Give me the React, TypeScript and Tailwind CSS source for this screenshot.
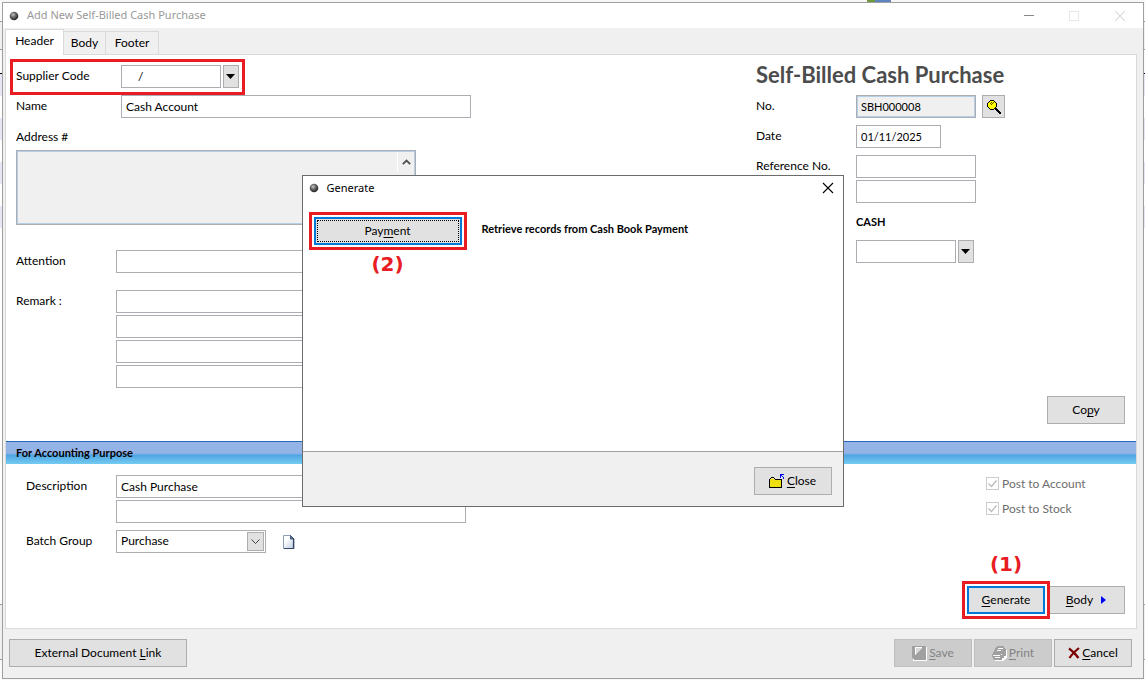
import React from 'react';
import { clsx } from 'clsx';

// Shared field and button styles
const fieldStyle = 'h-[23px] border border-[#abadb3] bg-white px-1 pb-px text-black outline-none';

interface PushButtonProps {
  children: React.ReactNode;
  variant?: 'normal' | 'default' | 'focused';
  disabled?: boolean;
  className?: string;
}

function PushButton({ children, variant = 'normal', disabled, className }: PushButtonProps) {
  return (
    <button
      type="button"
      disabled={disabled}
      className={clsx(
        'flex h-7 items-center justify-center whitespace-pre',
        disabled ? 'border border-[#bfbfbf] bg-[#cccccc] text-[#838383]' : 'bg-[#e1e1e1] text-black',
        !disabled && variant === 'normal' && 'border border-[#adadad]',
        variant !== 'normal' && 'border-2 border-[#0078d7]',
        variant === 'focused' && 'p-px',
        className
      )}
    >
      {variant === 'focused' ? (
        <span className="flex h-full w-full items-center justify-center border border-dotted border-black">
          {children}
        </span>
      ) : (
        children
      )}
    </button>
  );
}

function Key({ children }: { children: string }) {
  return <span className="underline underline-offset-2">{children}</span>;
}

function DropButton({ label }: { label: string }) {
  return (
    <button
      type="button"
      aria-label={label}
      className="flex h-[23px] w-4 items-center justify-center border border-[#adadad] bg-[#e1e1e1]"
    >
      <svg width="10" height="5" viewBox="0 0 10 5" className="shrink-0">
        <path d="M0 0h9L4.5 5z" fill="#000" />
      </svg>
    </button>
  );
}

function Ball() {
  return (
    <svg width="10" height="10" viewBox="0 0 10 10" className="shrink-0">
      <defs>
        <radialGradient id="ball" cx="0.4" cy="0.35" r="0.6">
          <stop offset="0" stopColor="#c8c8c8" />
          <stop offset="0.45" stopColor="#707070" />
          <stop offset="1" stopColor="#2c2c2c" />
        </radialGradient>
      </defs>
      <circle cx="5" cy="5" r="4.3" fill="url(#ball)" />
    </svg>
  );
}

function MagnifierIcon() {
  return (
    <svg width="14" height="14" viewBox="0 0 14 14" shapeRendering="crispEdges">
      <path d="M3 1h4v1h1v1h1v4h-1v1h-1v1h-4v-1h-1v-1h-1v-4h1v-1h1z" fill="#ff0" />
      <path
        d="M3 0h4v1h-4zM2 1h1v1h-1zM7 1h1v1h-1zM1 2h1v1h-1zM8 2h1v1h-1zM0 3h1v4h-1zM9 3h1v4h-1zM1 7h1v1h-1zM8 7h1v1h-1zM2 8h1v1h-1zM7 8h1v1h-1zM3 9h4v1h-4z"
        fill="#000"
      />
      <path d="M4 2h1v1h-1zM3 3h1v1h-1zM5 3h1v1h-1zM6 2h1v1h-1zM4 4h1v1h-1z" fill="#555500" />
      <path d="M8 8h2v1h1v1h1v1h1v1h1v2h-2v-1h-1v-1h-1v-1h-1v-1h-1z" fill="#000" />
    </svg>
  );
}

function FolderIcon() {
  return (
    <svg width="16" height="15" viewBox="0 0 16 15" shapeRendering="crispEdges">
      <path d="M1 5h12v8h-12z" fill="#eedf10" />
      <path d="M2 4h3v1h-3z" fill="#e8e890" />
      <path
        d="M2 3h3v1h-3zM1 4h1v1h-1zM5 4h1v1h-1zM0 5h1v9h-1zM6 5h7v1h-7zM12 5h1v9h-1zM0 13h13v1h-13z"
        fill="#000"
      />
      <path d="M11 0h4v1h-4zM11 1h2v1h-2zM11 2h1v1h-1zM13 2h1v1h-1zM11 3h1v1h-1zM14 3h1v2h-1z" fill="#0000f0" />
    </svg>
  );
}

function SaveIcon() {
  return (
    <svg width="15" height="15" viewBox="0 0 15 15" shapeRendering="crispEdges">
      <path d="M1 1h14v14h-14z" fill="#fff" />
      <path d="M0 0h14v14h-12l-2-2z" fill="#a0a0a0" />
      <path d="M3 2h7v1h-1v1h-1v1h-1v1h-1v1h-1v1h-1v1h-1z" fill="#d8d8d8" />
      <path d="M3 1h7v1h-7zM3 2h1v6h-1z" fill="#fff" />
    </svg>
  );
}

function PrintIcon() {
  return (
    <svg width="15" height="15" viewBox="0 0 15 15" shapeRendering="crispEdges">
      <path d="M5 2h8l2 3v6l-3 4h-9l-2-3z" fill="#fff" />
      <path d="M5 0h7v2h1v1h1v7h-2v2h-2v2h-8v-1h-1v-2h-1v-3h1v-2h1v-2h1v-2h1z" fill="#a0a0a0" />
      <path d="M6 2h5v1h-5zM5 4h4v1h-4zM1 9h7v1h-7zM3 11h5v1h-5zM9 8h1v1h-1z" fill="#fff" />
    </svg>
  );
}

function CrossIcon() {
  return (
    <svg width="12" height="12" viewBox="0 0 12 12">
      <path d="M1 1.5C4 3.5 8 7.5 10.5 11" stroke="#7c0000" strokeWidth="2.2" fill="none" />
      <path d="M11 1C8 3.5 3.5 7.5 1.5 11" stroke="#7c0000" strokeWidth="2.2" fill="none" />
    </svg>
  );
}

function PageIcon() {
  return (
    <svg width="12" height="14" viewBox="0 0 12 14">
      <defs>
        <linearGradient id="page" x1="0" y1="0" x2="1" y2="1">
          <stop offset="0.3" stopColor="#fff" />
          <stop offset="1" stopColor="#b9cbe2" />
        </linearGradient>
      </defs>
      <path d="M0.5 0.5h7l3.5 3.5v9.5h-10.5z" fill="url(#page)" stroke="#8c9db5" />
      <path d="M10.5 4v9.5h-9.5" fill="none" stroke="#33455f" strokeWidth="1.2" />
      <path d="M7.5 0.5l3.5 3.5h-3.5z" fill="#5c7391" stroke="#33455f" strokeWidth="0.8" />
    </svg>
  );
}

function CloseIcon() {
  return (
    <svg width="12" height="12" viewBox="0 0 12 12">
      <path d="M1 1l10 10M11 1L1 11" stroke="currentColor" strokeWidth="1.1" />
    </svg>
  );
}

// Red step marker frame drawn around a control
function Frame() {
  return <div className="pointer-events-none absolute -inset-[5px] border-3 border-[#e81c23]" />;
}

interface FieldRowProps {
  label: string;
  id: string;
  labelWidth?: string;
  className?: string;
  children: React.ReactNode;
}

function FieldRow({ label, id, labelWidth = 'w-[100px]', className, children }: FieldRowProps) {
  return (
    <div className={clsx('flex items-start', className)}>
      <label htmlFor={id} className={clsx('shrink-0 leading-[22px]', labelWidth)}>
        {label}
      </label>
      {children}
    </div>
  );
}

function PostOption({ id, label }: { id: string; label: string }) {
  return (
    <div className="flex h-[25px] items-center gap-[3px]">
      <span className="relative flex">
        <input
          id={id}
          type="checkbox"
          defaultChecked
          disabled
          className="h-[13px] w-[13px] appearance-none border border-[#cccccc] bg-white"
        />
        <svg width="13" height="13" viewBox="0 0 13 13" className="absolute inset-0">
          <path d="M2.5 6.5l3 3 5-6" stroke="#bcbcbc" strokeWidth="1.3" fill="none" />
        </svg>
      </span>
      <label htmlFor={id} className="text-[#6d6d6d]">
        {label}
      </label>
    </div>
  );
}

const stripes = ['bg-[#e6e6f5]', 'bg-white', 'bg-[#e6e6f5]', 'bg-white', 'bg-[#e6e6f5]', 'bg-white', 'bg-[#e6e6f5]'];

// Edge of the record list that sits behind the window
function ListEdge({ className }: { className: string }) {
  return (
    <div className={clsx('flex shrink-0 flex-col bg-[#fafafa]', className)}>
      <div className="h-5 border-b border-[#999999]" />
      <div className="h-7 border-b border-[#999999] bg-[#f0f0f0]" />
      <div className="h-6 border-b border-black" />
      {stripes.map((color, i) => (
        <div key={i} className={clsx('h-[22px]', color)} />
      ))}
      <div className="flex-1 bg-white" />
      <div className="h-14 border-y border-[#999999] bg-[#f0f0f0]" />
      <div className="h-5" />
    </div>
  );
}

function HeaderFields() {
  return (
    <div className="w-[480px] pt-2.5 pl-2.5">
      <div className="relative">
        <FieldRow label="Supplier Code" id="supplier" labelWidth="w-[105px]">
          <input id="supplier" defaultValue="/" className={clsx(fieldStyle, 'w-[100px] pl-4')} />
          <div className="ml-0.5">
            <DropButton label="Choose supplier" />
          </div>
        </FieldRow>
        <div className="pointer-events-none absolute -top-1.5 -left-1.5 h-9 w-[235px] border-3 border-[#e81c23]" />
      </div>
      <FieldRow label="Name" id="name" labelWidth="w-[105px]" className="mt-[7px]">
        <input id="name" defaultValue="Cash Account" className={clsx(fieldStyle, 'w-[350px]')} />
      </FieldRow>
      <label htmlFor="address" className="mt-2 block h-6 leading-[22px]">
        Address #
      </label>
      <div className="relative w-[400px]">
        <textarea
          id="address"
          readOnly
          className="block h-[75px] w-full resize-none border border-[#abadb3] bg-[#f0f0f0] ring-1 ring-[#b5cfe7] outline-none ring-inset"
        />
        <div className="absolute top-0.5 right-0.5 flex h-5 w-[17px] items-center justify-center border-l border-white">
          <svg width="9" height="6" viewBox="0 0 9 6">
            <path d="M0.8 5.2l3.7-3.7 3.7 3.7" stroke="#505050" strokeWidth="1.8" fill="none" />
          </svg>
        </div>
      </div>
      <FieldRow label="Attention" id="attention" className="mt-[25px]">
        <input id="attention" className={clsx(fieldStyle, 'w-[350px]')} />
      </FieldRow>
      <FieldRow label="Remark :" id="remark" className="mt-[17px]">
        <div className="flex flex-col gap-0.5">
          <input id="remark" className={clsx(fieldStyle, 'w-[350px]')} />
          <input aria-label="Remark line 2" className={clsx(fieldStyle, 'w-[350px]')} />
          <input aria-label="Remark line 3" className={clsx(fieldStyle, 'w-[350px]')} />
          <input aria-label="Remark line 4" className={clsx(fieldStyle, 'w-[350px]')} />
        </div>
      </FieldRow>
    </div>
  );
}

function DocumentFields() {
  return (
    <div className="flex w-[380px] flex-col pt-1.5 pr-[11px]">
      <h1 className="h-[34px] text-[22px] leading-7 font-bold text-[#4c4c4c]">Self-Billed Cash Purchase</h1>
      <FieldRow label="No." id="docNo">
        <input
          id="docNo"
          readOnly
          defaultValue="SBH000008"
          className="h-[23px] w-[120px] border border-[#abadb3] bg-[#f0f0f0] px-1 pb-px text-[11px] ring-1 ring-[#b5cfe7] outline-none ring-inset"
        />
        <button
          type="button"
          aria-label="Look up number"
          className="ml-1.5 flex h-[23px] w-[23px] items-center justify-center border border-[#adadad] bg-[#e1e1e1]"
        >
          <MagnifierIcon />
        </button>
      </FieldRow>
      <FieldRow label="Date" id="date" className="mt-[7px]">
        <input id="date" defaultValue="01/11/2025" className={clsx(fieldStyle, 'w-[85px] text-[11px]')} />
      </FieldRow>
      <FieldRow label="Reference No." id="reference" className="mt-[7px]">
        <div className="flex flex-col gap-0.5">
          <input id="reference" className={clsx(fieldStyle, 'w-[120px]')} />
          <input aria-label="Second reference" className={clsx(fieldStyle, 'w-[120px]')} />
        </div>
      </FieldRow>
      <div className="ml-[100px]">
        <label htmlFor="cash" className="mt-[7px] mb-[7px] block text-[11px] leading-[23px] font-bold">
          CASH
        </label>
        <div className="flex gap-0.5">
          <input id="cash" className={clsx(fieldStyle, 'w-[100px]')} />
          <DropButton label="Choose cash account" />
        </div>
      </div>
      <PushButton className="mt-auto mb-[17px] w-[78px] self-end">
        <span>
          Co<Key>p</Key>y
        </span>
      </PushButton>
    </div>
  );
}

function AccountingFields() {
  return (
    <div className="flex flex-1 justify-between pr-[11px] pl-5">
      <div className="pt-[11px]">
        <FieldRow label="Description" id="description" labelWidth="w-[90px]">
          <div className="flex flex-col gap-0.5">
            <input id="description" defaultValue="Cash Purchase" className={clsx(fieldStyle, 'w-[350px]')} />
            <input aria-label="Description line 2" className={clsx(fieldStyle, 'w-[350px]')} />
          </div>
        </FieldRow>
        <FieldRow label="Batch Group" id="batch" labelWidth="w-[90px]" className="mt-[7px]">
          <div className="relative">
            <select id="batch" className={clsx(fieldStyle, 'block w-[150px] appearance-none')}>
              <option>Purchase</option>
            </select>
            <span className="pointer-events-none absolute top-0.5 right-0.5 flex h-[19px] w-[17px] items-center justify-center border border-[#adadad] bg-[#e1e1e1]">
              <svg width="9" height="5" viewBox="0 0 9 5">
                <path d="M0.5 0.5l4 4 4-4" stroke="#404040" fill="none" />
              </svg>
            </span>
          </div>
          <button type="button" aria-label="New batch group" className="ml-[17px] flex h-6 items-center">
            <PageIcon />
          </button>
        </FieldRow>
      </div>
      <div className="flex flex-col justify-between pt-[7px] pb-3.5">
        <div className="ml-[19px]">
          <PostOption id="postAccount" label="Post to Account" />
          <PostOption id="postStock" label="Post to Stock" />
        </div>
        <div>
          <div className="mb-1.5 w-[78px] text-center font-['DejaVu_Sans'] text-xl leading-8 font-bold text-[#e81c23]">
            (1)
          </div>
          <div className="flex gap-0.5">
            <div className="relative z-10">
              <PushButton variant="default" className="w-[78px]">
                <Key>G</Key>enerate
              </PushButton>
              <Frame />
            </div>
            <PushButton className="w-[78px] gap-2">
              <span>
                <Key>B</Key>ody
              </span>
              <svg width="5" height="8" viewBox="0 0 5 8">
                <path d="M0 0l5 4-5 4z" fill="#0000ff" />
              </svg>
            </PushButton>
          </div>
        </div>
      </div>
    </div>
  );
}

function GenerateDialog() {
  return (
    <div className="pointer-events-none fixed inset-0 z-20 flex items-center justify-center pt-0.5">
      <div
        role="dialog"
        aria-label="Generate"
        className="pointer-events-auto flex w-[542px] flex-col border border-[#6b6b6b] bg-white"
      >
        <div className="flex h-6 items-center pr-[9px] pl-1.5 font-['Noto_Sans'] text-[11px]">
          <Ball />
          <span className="ml-2 flex-1">Generate</span>
          <button type="button" aria-label="Close dialog" className="text-black">
            <CloseIcon />
          </button>
        </div>
        <div className="flex h-[251px] items-start gap-5 px-[11px] pt-[17px]">
          <div>
            <div className="relative">
              <PushButton variant="focused" className="w-[148px]">
                Pay<Key>m</Key>ent
              </PushButton>
              <Frame />
            </div>
            <div className="mt-[3px] text-center font-['DejaVu_Sans'] text-xl leading-8 font-bold text-[#e81c23]">
              (2)
            </div>
          </div>
          <p className="text-[11px] leading-[23px] font-bold">Retrieve records from Cash Book Payment</p>
        </div>
        <div className="flex h-[55px] items-center justify-end border-t border-[#a0a0a0] bg-[#f0f0f0] pt-1 pr-[11px]">
          <PushButton className="w-[78px] gap-0.5">
            <FolderIcon />
            <span>
              <Key>C</Key>lose
            </span>
          </PushButton>
        </div>
      </div>
    </div>
  );
}

export default function App() {
  return (
    <div className="flex min-h-screen flex-col bg-[#f7f7f7] font-['Lato','Noto_Sans',sans-serif] text-xs text-black">
      <div className="flex h-0.5 justify-end pr-[254px]">
        <div className="h-0.5 w-2 bg-[#6f9a3c]" />
        <div className="h-0.5 w-4 bg-[#5f82c0]" />
      </div>
      <div className="flex flex-1">
        <ListEdge className="w-0.5" />
        <div className="mb-px flex flex-1 flex-col border border-[#a0a0a0] bg-[#f0f0f0]">
          <header className="flex h-[25px] items-center bg-white pr-[17px] pl-1.5 font-['Noto_Sans'] text-[11px] text-[#999999]">
            <Ball />
            <span className="ml-2 flex-1">Add New Self-Billed Cash Purchase</span>
            <div className="flex items-center gap-[35px]">
              <button type="button" aria-label="Minimize" className="h-px w-2.5 bg-[#888888]" />
              <button type="button" aria-label="Maximize" className="h-2.5 w-2.5 border border-[#e8e8e8]" />
              <button type="button" aria-label="Close" className="text-[#dddddd]">
                <CloseIcon />
              </button>
            </div>
          </header>

          <nav className="flex items-end pt-px pl-0.5" role="tablist">
            <button
              type="button"
              role="tab"
              aria-selected="true"
              className="relative z-10 -mb-px h-[26px] w-[59px] border border-b-0 border-[#dadada] bg-white pb-1 text-center"
            >
              Header
            </button>
            <button type="button" role="tab" className="h-[23px] w-[42px] border-t border-r border-[#dadada]">
              Body
            </button>
            <button type="button" role="tab" className="h-[23px] w-[53px] border-t border-r border-[#dadada]">
              Footer
            </button>
          </nav>

          <main className="mr-1.5 ml-0.5 flex flex-1 flex-col border border-[#dadada] bg-white">
            <section className="flex h-[386px] justify-between">
              <HeaderFields />
              <DocumentFields />
            </section>
            <h2 className="h-[23px] border-t border-[#2868b8] bg-linear-to-b from-[#94b4e8] from-50% via-[#4fa5e2] via-60% to-[#74cbf2] pl-2.5 text-[11px] leading-[21px] font-bold">
              For Accounting Purpose
            </h2>
            <AccountingFields />
          </main>

          <footer className="flex items-center gap-0.5 pt-2.5 pr-[11px] pb-[11px] pl-1.5">
            <PushButton className="mr-auto w-[178px]">
              External Document <Key>L</Key>ink
            </PushButton>
            <PushButton disabled className="w-[78px]">
              <SaveIcon />
              <span className="ml-0.5">
                <Key>S</Key>ave
              </span>
            </PushButton>
            <PushButton disabled className="w-[78px]">
              <PrintIcon />
              <span className="ml-0.5">
                <Key>P</Key>rint
              </span>
            </PushButton>
            <PushButton className="w-[78px]">
              <CrossIcon />
              <span className="ml-0.5">
                <Key>C</Key>ancel
              </span>
            </PushButton>
          </footer>
        </div>
        <ListEdge className="w-px" />
      </div>
      <GenerateDialog />
    </div>
  );
}
